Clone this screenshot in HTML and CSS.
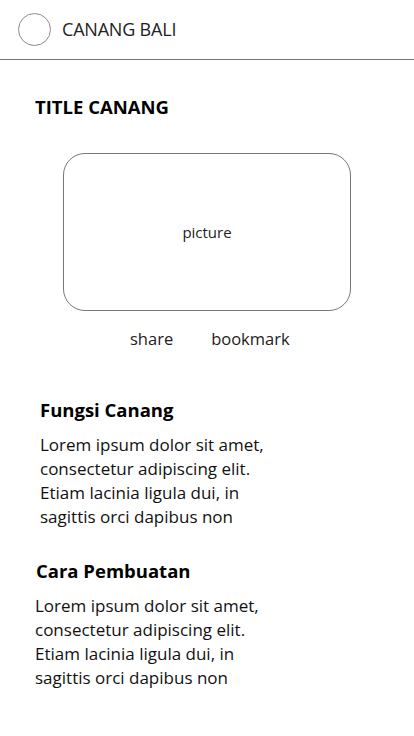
FILE: index.html
```html
<!DOCTYPE html>
<html lang="id">
<head>
<meta charset="utf-8">
<title>Canang Bali</title>
<link rel="stylesheet" href="styles.css">
</head>
<body>
<header class="topbar">
  <span class="logo"></span>
  <span class="brand">CANANG BALI</span>
</header>
<main class="content">
  <h1 class="page-title">TITLE CANANG</h1>
  <div class="picture">picture</div>
  <div class="actions">
    <span class="action">share</span>
    <span class="action">bookmark</span>
  </div>
  <section class="section s1">
    <h2 class="section-title">Fungsi Canang</h2>
    <p class="section-text">Lorem ipsum dolor sit amet, consectetur adipiscing elit. Etiam lacinia ligula dui, in sagittis orci dapibus non</p>
  </section>
  <section class="section s2">
    <h2 class="section-title">Cara Pembuatan</h2>
    <p class="section-text">Lorem ipsum dolor sit amet, consectetur adipiscing elit. Etiam lacinia ligula dui, in sagittis orci dapibus non</p>
  </section>
</main>
</body>
</html>
```
FILE: styles.css
```css
* { box-sizing: border-box; }
html, body { margin: 0; padding: 0; background: #fff; }
body {
  font-family: "Open Sans", "Noto Sans", sans-serif;
  color: #111;
  width: 414px;
}
.topbar {
  height: 60px;
  border-bottom: 1px solid #777;
  display: flex;
  align-items: center;
  padding-left: 18px;
  padding-bottom: 1px;
  gap: 11px;
}
.logo {
  width: 33px;
  height: 33px;
  border: 1px solid #8a8a8a;
  border-radius: 50%;
}
.brand {
  font-size: 18px;
  font-weight: 400;
  color: #222;
  letter-spacing: -0.2px;
}
.content { padding: 0; }
.page-title {
  margin: 0;
  padding: 36px 0 0 35px;
  font-size: 18.5px;
  font-weight: 700;
  line-height: 22px;
  color: #000;
}
.picture {
  margin: 35px 0 0 63px;
  width: 288px;
  height: 158px;
  border: 1px solid #777;
  border-radius: 22px;
  display: flex;
  align-items: center;
  justify-content: center;
  font-size: 15px;
  color: #222;
}
.actions {
  display: flex;
  gap: 38px;
  padding: 16px 0 0 130px;
  font-size: 16.5px;
  line-height: 24px;
  color: #222;
}
.section-title {
  margin: 0;
  font-size: 18.5px;
  font-weight: 700;
  line-height: 24px;
  color: #000;
}
.section-text {
  margin: 11px 0 0;
  font-size: 17px;
  line-height: 24px;
  width: 240px;
  color: #111;
}
.s1 { padding: 47px 0 0 40px; }
.s2 { padding: 30px 0 0 36px; }
.s2 .section-text { margin-left: -1px; }
```
